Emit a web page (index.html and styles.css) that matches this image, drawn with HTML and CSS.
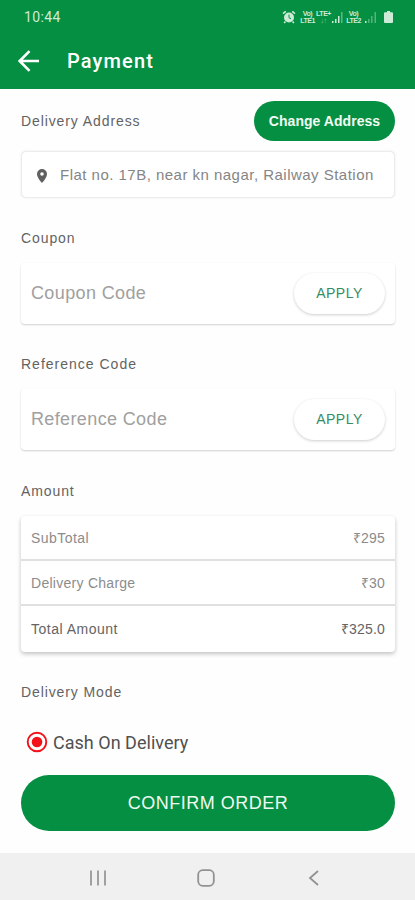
FILE: index.html
```html
<!DOCTYPE html>
<html lang="en">
<head>
<meta charset="utf-8">
<title>Payment</title>
<link rel="stylesheet" href="styles.css">
</head>
<body>
<header class="header">
  <div class="status">
    <span class="clock">10:44</span>
    <div class="status-icons">
      <svg class="alarm" width="14" height="14" viewBox="0 0 14 14"><circle cx="7" cy="7.5" r="5" fill="currentColor"/><path d="M1 3.6 3.8 1.4M13 3.6 10.2 1.4M3.4 11.6 2.2 13M10.6 11.6 11.8 13" stroke="currentColor" stroke-width="1.6"/><path d="M7 4.6V7.8L9 8.6" fill="none" stroke="#058f42" stroke-width="1"/></svg>
      <span class="net net-one">Vo)<br>LTE1</span>
      <span class="net net-lte">LTE+<br><span class="arrows">↓↑</span></span>
      <svg class="signal" width="11" height="12" viewBox="0 0 11 12" fill="currentColor"><path d="M0 10h1.5v2H0zM3 8h1.5v4H3zM6 5h1.5v7H6z"/><path opacity=".45" d="M9 1h1.5v11H9z"/></svg>
      <span class="net net-two">Vo)<br>LTE2</span>
      <svg class="signal-two" width="12" height="12" viewBox="0 0 12 12" fill="currentColor"><path d="M0 10h1.5v2H0z"/><path opacity=".4" d="M3 8h1.5v4H3zM6 5h1.5v7H6zM9.5 1H11v11H9.500z"/></svg>
      <svg class="battery" width="9" height="12" viewBox="0 0 9 12" fill="currentColor"><path d="M3 0h3v1.200h2q1 0 1 1V11q0 1-1 1H1q-1 0-1-1V2.200q0-1 1-1h2z"/></svg>
    </div>
  </div>
  <div class="toolbar">
    <svg class="back" width="22" height="22" viewBox="0 0 22 22" fill="none" stroke="#fff" stroke-width="2.600"><path d="M21 11H2M11.500 1.200 1.700 11l9.800 9.800"/></svg>
    <h1 class="title">Payment</h1>
  </div>
</header>
<main class="content">
  <section class="address">
    <div class="address-head">
      <h2 class="label">Delivery Address</h2>
      <button class="change">Change Address</button>
    </div>
    <div class="address-card">
      <svg width="10" height="14" viewBox="0 0 10 14"><path fill="#606060" fill-rule="evenodd" d="M5 0a5 5 0 0 0-5 5c0 3.700 5 9 5 9s5-5.300 5-9a5 5 0 0 0-5-5zm0 3.200a1.800 1.800 0 1 1 0 3.600 1.800 1.800 0 0 1 0-3.600z"/></svg>
      <span class="address-text">Flat no. 17B, near kn nagar, Railway Station</span>
    </div>
  </section>
  <section class="code-section">
    <h2 class="label">Coupon</h2>
    <div class="code-card"><span class="placeholder">Coupon Code</span><button class="apply">APPLY</button></div>
  </section>
  <section class="code-section reference">
    <h2 class="label">Reference Code</h2>
    <div class="code-card"><span class="placeholder">Reference Code</span><button class="apply">APPLY</button></div>
  </section>
  <section class="amount">
    <h2 class="label">Amount</h2>
    <div class="amount-card">
      <div class="row"><span>SubTotal</span><span class="price">₹295</span></div>
      <div class="row charge"><span>Delivery Charge</span><span class="price">₹30</span></div>
      <div class="row total"><span>Total Amount</span><span class="price">₹325.0</span></div>
    </div>
  </section>
  <section class="mode">
    <h2 class="label">Delivery Mode</h2>
    <div class="option">
      <svg width="22" height="22" viewBox="0 0 22 22"><circle cx="11" cy="11" r="9.300" fill="none" stroke="#f3111a" stroke-width="1.900"/><circle cx="11" cy="11" r="5.300" fill="#f3111a"/></svg>
      <span class="option-text">Cash On Delivery</span>
    </div>
  </section>
  <button class="confirm">CONFIRM ORDER</button>
</main>
<nav class="nav">
  <svg width="18" height="18" viewBox="0 0 18 18" stroke="#a0a0a0" stroke-width="2"><path d="M2 1.500v15M9 1.500v15M16 1.500v15"/></svg>
  <svg width="18" height="18" viewBox="0 0 18 18" fill="none" stroke="#929292" stroke-width="1.800"><rect x="1.200" y="1.200" width="15.600" height="15.600" rx="4.500"/></svg>
  <svg width="18" height="18" viewBox="0 0 18 18" fill="none" stroke="#929292" stroke-width="1.800"><path d="m13 2-8 7 8 7"/></svg>
</nav>
</body>
</html>
```
FILE: styles.css
```css
* { box-sizing: border-box; }
body {
  margin: 0;
  width: 415px;
  height: 900px;
  overflow: hidden;
  display: flex;
  flex-direction: column;
  background: #fefefe;
  font-family: "Liberation Sans", Arial, sans-serif;
}
svg { display: block; flex: none; }
button { border: 0; padding: 0; font-family: inherit; }
h1, h2 { margin: 0; font-weight: 400; }
.header { height: 89px; flex: none; background: #058f42; color: #fff; }
.status { height: 33px; display: flex; align-items: center; justify-content: space-between; padding: 0 21px 0 24px; color: #cdebd6; }
.clock { font: 14px/16px Roboto, sans-serif; letter-spacing: .35px; }
.status-icons { display: flex; align-items: center; }
.net { font: 700 7px/7px "Liberation Sans", sans-serif; letter-spacing: -.5px; text-align: center; }
.net-one { width: 17px; margin-left: 3px; }
.net-lte { width: 15px; }
.arrows { opacity: .6; }
.signal { margin-left: 1px; }
.net-two { width: 17px; margin-left: 2px; }
.signal-two { margin-left: 3px; }
.battery { margin-left: 7px; margin-right: 1px; }
.toolbar { height: 56px; display: flex; align-items: center; padding: 0 0 1px 18px; }
.title { margin-left: 27px; font: 500 20px/28px Roboto, sans-serif; letter-spacing: 1.15px; }
.content { height: 764px; flex: none; padding: 12px 20px 0 21px; display: flex; flex-direction: column; }
.label { font-size: 14px; line-height: 20px; letter-spacing: .9px; color: #636363; white-space: nowrap; }
.reference .label { letter-spacing: 1px; }
.address-head { display: flex; align-items: center; justify-content: space-between; height: 40px; }
.change { width: 141px; height: 40px; border-radius: 20px; background: #058f42; color: #f0fbf3; font-size: 14px; font-weight: 700; letter-spacing: .05px; }
.address-card { margin-top: 10px; height: 47px; border-radius: 5px; border: 1px solid #ececec; box-shadow: 0 0 2px #e6e6e6; background: #fff; display: flex; align-items: center; padding: 2px 0 0 15px; }
.address-text { margin-left: 13px; padding-bottom: 2px; font-size: 15px; letter-spacing: .48px; color: #858585; white-space: nowrap; }
.code-section { margin-top: 30px; }
.code-card { margin-top: 15px; height: 61px; border-radius: 4px; background: #fff; box-shadow: 0 1px 2px #d0d0d0; display: flex; align-items: center; justify-content: space-between; padding: 0 10px; }
.placeholder { font-size: 18px; letter-spacing: .37px; color: #a0a0a0; }
.apply { width: 91px; height: 41px; padding-bottom: 2px; border-radius: 21px; background: #fff; box-shadow: 0 1px 3px #cecece; color: #368c63; font-size: 14px; letter-spacing: .5px; }
.amount { margin-top: 31px; }
.amount-card { margin-top: 15px; height: 136px; border-radius: 4px; background: #fff; box-shadow: 0 2px 4px #c2c2c2; }
.row { height: 45px; display: flex; align-items: center; justify-content: space-between; padding: 0 10px; border-bottom: 2px solid #e0e0e0; font-size: 14px; letter-spacing: .45px; color: #8c8c8c; }
.row.charge { letter-spacing: .27px; }
.row.total { border-bottom: 0; color: #646464; letter-spacing: .5px; }
.row .price { letter-spacing: .2px; }
.mode { margin-top: 30px; }
.option { margin-top: 29px; height: 22px; display: flex; align-items: center; margin-left: 5px; }
.option-text { margin-left: 5px; padding-top: 1px; font: 18px/24px Roboto, sans-serif; color: #505050; letter-spacing: .02px; }
.confirm { flex: none; margin-top: 22px; width: 374px; height: 56px; border-radius: 28px; background: #058f42; color: #eefaf0; font-size: 18px; letter-spacing: .5px; }
.nav { height: 47px; flex: none; background: #f0f0f0; display: flex; align-items: center; justify-content: space-between; padding: 2px 92px 0 89px; }
```
